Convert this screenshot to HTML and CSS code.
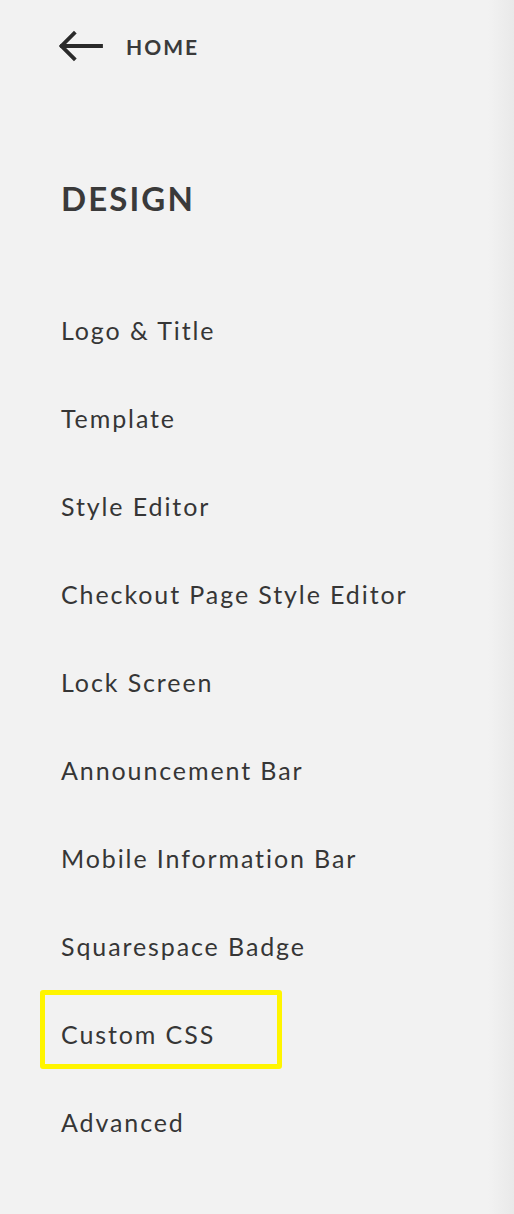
FILE: index.html
```html
<!DOCTYPE html>
<html>
<head>
<meta charset="utf-8">
<link rel="stylesheet" href="styles.css">
</head>
<body>
<div class="panel">
  <a class="back" href="#">
    <svg class="arrow" width="44" height="32" viewBox="0 0 44 32">
      <path d="M42 16 H3 M15 3.5 L2.5 16 L15 28.5" fill="none" stroke="#2a2a2a" stroke-width="3.8" stroke-linecap="square"/>
    </svg>
    <span class="back-label">HOME</span>
  </a>
  <h1 class="title">DESIGN</h1>
  <ul class="menu">
    <li class="item">Logo &amp; Title</li>
    <li class="item">Template</li>
    <li class="item">Style Editor</li>
    <li class="item">Checkout Page Style Editor</li>
    <li class="item">Lock Screen</li>
    <li class="item">Announcement Bar</li>
    <li class="item">Mobile Information Bar</li>
    <li class="item">Squarespace Badge</li>
    <li class="item highlighted">Custom CSS<span class="highlight-box"></span></li>
    <li class="item">Advanced</li>
  </ul>
</div>
</body>
</html>
```
FILE: styles.css
```css
html, body {
  margin: 0;
  padding: 0;
}
body {
  background: #f2f2f2;
  font-family: Lato, "Noto Sans", sans-serif;
  color: #3a3a3a;
}
.panel {
  min-height: 1214px;
  box-sizing: border-box;
  padding-left: 61px;
  background: linear-gradient(to right, #f2f2f2 0, #f2f2f2 488px, #e9e9e9 514px);
}
.back {
  display: flex;
  align-items: center;
  height: 92px;
  margin-left: -2px;
  text-decoration: none;
  color: #3a3a3a;
}
.arrow {
  display: block;
}
.back-label {
  margin-left: 23px;
  font-size: 21px;
  font-weight: 700;
  letter-spacing: 2px;
  line-height: 1;
}
.title {
  margin: 86px 0 0 0;
  font-size: 33px;
  line-height: 40px;
  font-weight: 700;
  letter-spacing: 2.1px;
  color: #3a3a3a;
}
.menu {
  list-style: none;
  margin: 68px 0 0 0;
  padding: 0;
}
.item {
  position: relative;
  display: flex;
  align-items: center;
  height: 88px;
  font-size: 25px;
  letter-spacing: 1.9px;
  color: #363636;
}
.highlight-box {
  position: absolute;
  left: -21px;
  top: 0;
  width: 242px;
  height: 79px;
  box-sizing: border-box;
  border: 5px solid #fff500;
  border-radius: 3px;
}
```
